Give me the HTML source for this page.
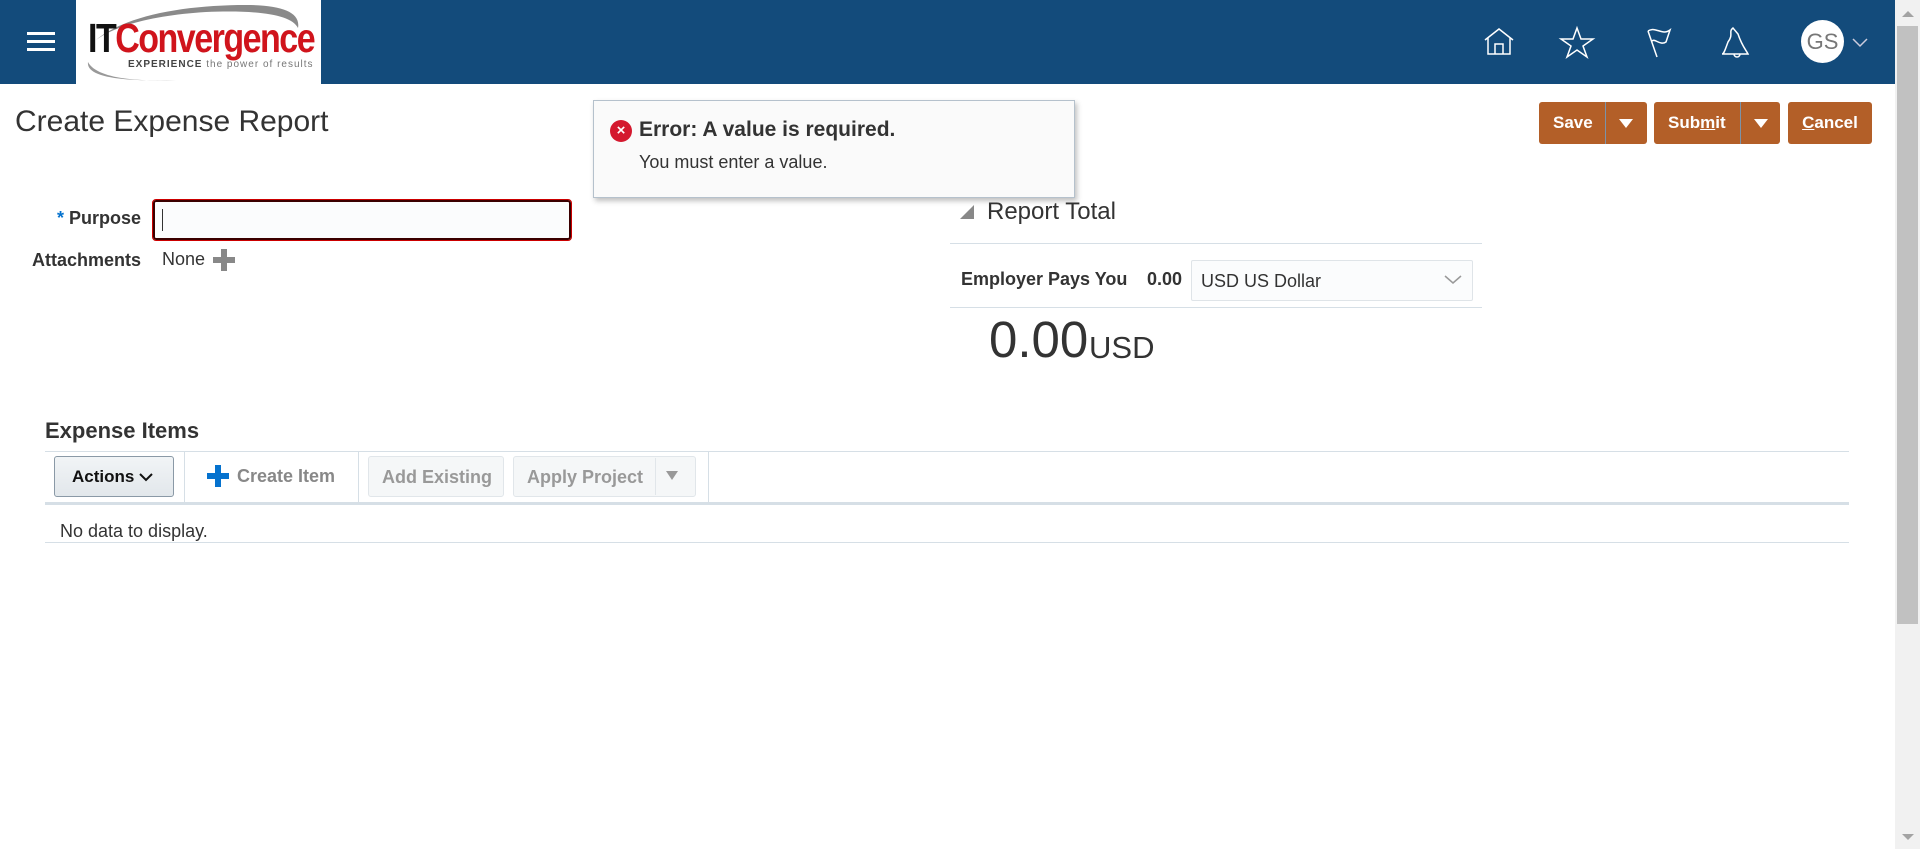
<!DOCTYPE html>
<html><head><meta charset="utf-8"><style>
*{box-sizing:border-box;margin:0;padding:0}
body{width:1920px;height:849px;overflow:hidden;background:#fff;font-family:"Liberation Sans",Arial,sans-serif;color:#333;position:relative}
.a{position:absolute}
.hdr{left:0;top:0;width:1895px;height:84px;background:#134b7b}
.btn{background:#b35f28;color:#fff;font-weight:bold;font-size:17px;height:42px;border-radius:3px;display:flex;align-items:center}
.line{height:1px;background:#d6dfe6}
.lbl{font-size:18px;font-weight:bold;color:#333;text-align:right;width:200px}
</style></head><body>
<div class="a hdr"></div>
<div class="a" style="left:27px;top:32px;width:28px;height:3px;background:#fff;box-shadow:0 8px 0 #fff,0 16px 0 #fff"></div>
<div class="a" style="left:76px;top:0;width:245px;height:84px;background:#fff;overflow:hidden">
<svg width="245" height="84" style="position:absolute;left:0;top:0"><path d="M20 40 C50 15 110 5 170 5 C205 5 225 12 222 28 C215 14 180 10 130 12 C80 15 40 25 20 40 Z" fill="#8a8a8a"/><path d="M12 62 C10 76 40 82 100 80 C60 82 20 78 12 62Z" fill="#999"/></svg>
<div class="a" style="left:12px;top:16px;font-size:34px;font-weight:bold;letter-spacing:-1.5px;color:#111;transform:scaleY(1.2);transform-origin:top;white-space:nowrap">IT<span style="color:#d0141c">Convergence</span></div>
<div class="a" style="left:52px;top:59px;font-size:10px;color:#444;font-weight:bold;letter-spacing:1px;white-space:nowrap">EXPERIENCE <span style="font-weight:normal;color:#777">the power of results</span></div>
</div>
<svg class="a" style="left:1480px;top:24px" width="400" height="40" fill="none" stroke="#fff" stroke-width="1.5">
<path d="M5 16 L19 5 L33 16 M8 14 V30 H30 V14 M15 30 V20 H23 V30"/>
<path d="M97 4 L101 15 L113 15 L103 22 L107 33 L97 26 L87 33 L91 22 L81 15 L93 15 Z"/>
<path d="M168 7 L177 33 M168 7 C176 2 182 12 190 6 L186 18 C180 22 175 14 172 17"/>
<path d="M253 4 C248 8 254 10 248 18 C245 26 244 30 242 30 L268 30 C266 26 262 22 258 10 Z M254 30 a3 3 0 0 0 6 0"/>
</svg>
<div class="a" style="left:1801px;top:20px;width:43px;height:43px;border-radius:50%;background:#fff;color:#777;font-size:22px;text-align:center;line-height:43px">GS</div>
<svg class="a" style="left:1852px;top:38px" width="16" height="10" fill="none" stroke="#ccd" stroke-width="1.5"><path d="M1 1 L8 8 L15 1"/></svg>
<div class="a" style="left:1895px;top:0;width:25px;height:849px;background:#f1f1f1"></div>
<div class="a" style="left:1897px;top:26px;width:21px;height:598px;background:#c1c1c1"></div>
<div class="a" style="left:1902px;top:11px;border:6px solid transparent;border-bottom:6px solid #a3a3a3;border-top:0"></div>
<div class="a" style="left:1902px;top:834px;border:6px solid transparent;border-top:6px solid #a3a3a3;border-bottom:0"></div>

<div class="a" style="left:15px;top:105px;font-size:30px;color:#333">Create Expense Report</div>

<div class="a btn" style="left:1539px;top:102px;width:108px"><span style="margin-left:14px;width:52px">Save</span><span style="width:1px;height:42px;background:#7c93a8"></span><span style="margin-left:13px;border:7px solid transparent;border-top:9px solid #fff;border-bottom:0"></span></div>
<div class="a btn" style="left:1654px;top:102px;width:126px"><span style="margin-left:14px;width:72px">Sub<u>m</u>it</span><span style="width:1px;height:42px;background:#7c93a8"></span><span style="margin-left:13px;border:7px solid transparent;border-top:9px solid #fff;border-bottom:0"></span></div>
<div class="a btn" style="left:1788px;top:102px;width:84px;justify-content:center"><u>C</u>ancel</div>

<div class="a" style="left:593px;top:100px;width:482px;height:98px;background:#fafafa;border:1px solid #b5c1cc;box-shadow:2px 3px 5px rgba(0,0,0,.25)">
<div class="a" style="left:16px;top:19px;width:22px;height:22px;border-radius:50%;background:#d4182e;color:#fff;font-size:15px;font-weight:bold;text-align:center;line-height:22px">×</div>
<div class="a" style="left:45px;top:17px;font-size:21px;font-weight:bold;color:#333">Error: A value is required.</div>
<div class="a" style="left:45px;top:51px;font-size:18px;color:#333">You must enter a value.</div>
</div>

<div class="a lbl" style="left:-59px;top:208px"><span style="color:#0572ce">*</span> Purpose</div>
<div class="a" style="left:153px;top:200px;width:418px;height:40px;border:2px solid #3a0000;outline:1px solid #c00;border-radius:3px;background:#fbfcfd"></div>
<div class="a" style="left:162px;top:209px;width:1px;height:22px;background:#333"></div>
<div class="a lbl" style="left:-59px;top:250px">Attachments</div>
<div class="a" style="left:162px;top:249px;font-size:18px;color:#333">None</div>
<div class="a" style="left:213px;top:257px;width:22px;height:6px;background:#888"></div>
<div class="a" style="left:221px;top:249px;width:6px;height:22px;background:#888"></div>

<div class="a" style="left:960px;top:205px;border-left:14px solid transparent;border-bottom:14px solid #888"></div>
<div class="a" style="left:987px;top:198px;font-size:24px;color:#333">Report Total</div>
<div class="a line" style="left:950px;top:243px;width:532px"></div>
<div class="a" style="left:961px;top:269px;font-size:18px;font-weight:bold;color:#333">Employer Pays You</div>
<div class="a" style="left:1147px;top:269px;font-size:18px;font-weight:bold;color:#333">0.00</div>
<div class="a" style="left:1191px;top:260px;width:282px;height:41px;border:1px solid #dfe4e8;border-radius:2px;background:#fbfcfd;font-size:18px;color:#333;padding:10px 0 0 9px">USD US Dollar</div>
<svg class="a" style="left:1444px;top:275px" width="18" height="10" fill="none" stroke="#999" stroke-width="1.5"><path d="M1 1 L9 8 L17 1"/></svg>
<div class="a line" style="left:950px;top:307px;width:532px"></div>
<div class="a" style="left:989px;top:310px;font-size:51px;color:#333">0.00</div>
<div class="a" style="left:1089px;top:330px;font-size:31px;color:#333">USD</div>

<div class="a" style="left:45px;top:418px;font-size:22px;font-weight:bold;color:#333">Expense Items</div>
<div class="a line" style="left:45px;top:451px;width:1804px"></div>
<div class="a" style="left:45px;top:502px;width:1804px;height:3px;background:#d6dfe6"></div>
<div class="a" style="left:54px;top:456px;width:120px;height:41px;border:1px solid #8a99a6;border-radius:3px;background:linear-gradient(#f1f4f6,#e2e7eb);font-size:17px;font-weight:bold;color:#111;padding:10px 0 0 17px">Actions <svg width="14" height="9" fill="none" stroke="#111" stroke-width="2"><path d="M1 1 L7 7 L13 1"/></svg></div>
<div class="a" style="left:184px;top:452px;width:1px;height:50px;background:#d6dfe6"></div>
<div class="a" style="left:207px;top:473px;width:22px;height:6px;background:#0572ce"></div>
<div class="a" style="left:215px;top:465px;width:6px;height:22px;background:#0572ce"></div>
<div class="a" style="left:237px;top:466px;font-size:18px;font-weight:bold;color:#888">Create Item</div>
<div class="a" style="left:358px;top:452px;width:1px;height:50px;background:#d6dfe6"></div>
<div class="a" style="left:368px;top:456px;width:136px;height:41px;border:1px solid #e1e6ea;border-radius:3px;background:#f5f7f8;font-size:18px;font-weight:bold;color:#999;padding:10px 0 0 13px">Add Existing</div>
<div class="a" style="left:513px;top:456px;width:183px;height:41px;border:1px solid #e1e6ea;border-radius:3px;background:#f5f7f8;font-size:18px;font-weight:bold;color:#999;padding:10px 0 0 13px">Apply Project</div>
<div class="a" style="left:655px;top:458px;width:1px;height:37px;background:#e1e6ea"></div>
<div class="a" style="left:666px;top:471px;border:6px solid transparent;border-top:9px solid #999;border-bottom:0"></div>
<div class="a" style="left:708px;top:452px;width:1px;height:50px;background:#d6dfe6"></div>
<div class="a" style="left:60px;top:521px;font-size:18px;color:#333">No data to display.</div>
<div class="a line" style="left:45px;top:542px;width:1804px"></div>
</body></html>
